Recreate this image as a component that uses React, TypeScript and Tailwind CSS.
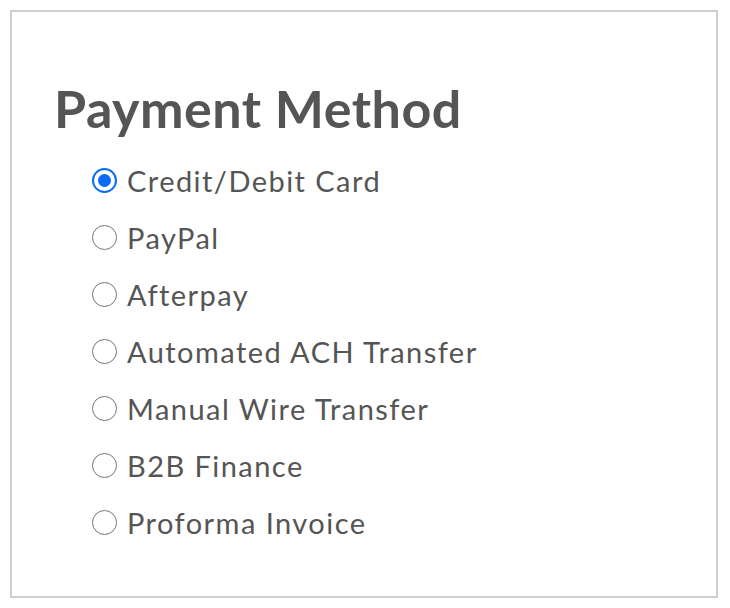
import { useState } from "react";

const methods = [
  "Credit/Debit Card",
  "PayPal",
  "Afterpay",
  "Automated ACH Transfer",
  "Manual Wire Transfer",
  "B2B Finance",
  "Proforma Invoice",
];

function Radio({ checked }: { checked: boolean }) {
  return checked ? (
    <span className="flex h-[25px] w-[25px] shrink-0 items-center justify-center rounded-full border-[2.5px] border-[#0a6cf5]">
      <span className="h-[13px] w-[13px] rounded-full bg-[#0a6cf5]" />
    </span>
  ) : (
    <span className="h-[25px] w-[25px] shrink-0 rounded-full border-[1.5px] border-[#767676] bg-white" />
  );
}

export default function App() {
  const [selected, setSelected] = useState(methods[0]);

  return (
    <div className="h-[608px] w-[730px] bg-white p-[10px] font-['Lato',sans-serif]">
      <div className="h-[588px] w-[708px] border-2 border-[#cfcfcf] pl-[42px] pt-[66px]">
        <h2 className="text-[52px] font-bold leading-[60px] tracking-[0.01em] text-[#555555]">Payment Method</h2>
        <ul className="mt-[14px] pl-[38px]">
          {methods.map((m) => (
            <li key={m}>
              <label
                className="flex h-[57px] cursor-pointer items-center gap-[10px] text-[29px] tracking-[0.05em] text-[#555555]"
                onClick={() => setSelected(m)}
              >
                <Radio checked={selected === m} />
                <span>{m}</span>
              </label>
            </li>
          ))}
        </ul>
      </div>
    </div>
  );
}
